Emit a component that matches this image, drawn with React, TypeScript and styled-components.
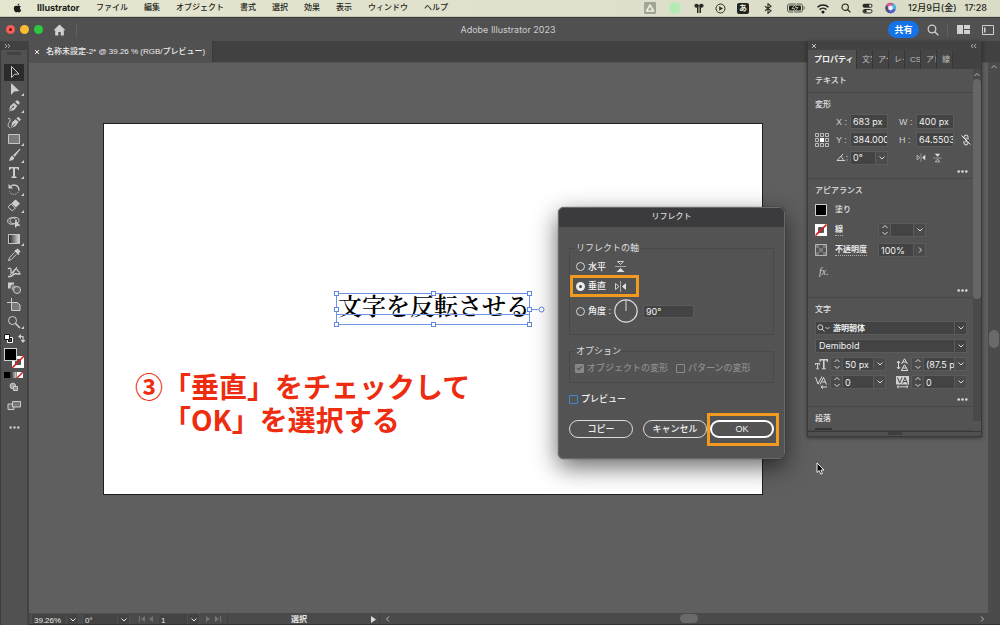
import React from "react";
import styled, { createGlobalStyle, css } from "styled-components";

const Global = createGlobalStyle`
  *, *::before, *::after { box-sizing: border-box; }
  html, body { margin: 0; }
  body {
    background: #5f5f5f;
    color: #e6e6e6;
    font-family: "Liberation Sans", "Noto Sans CJK JP", sans-serif;
    font-size: 8px;
    line-height: 12px;
  }
  button, input, select { font: inherit; color: inherit; margin: 0; padding: 0; border: 0; background: none; border-radius: 0; }
  fieldset, legend, h1, h2, p { margin: 0; padding: 0; border: 0; font: inherit; }
  input { min-width: 0; outline: none; }
  svg { display: block; flex: none; }
`;

const Screen = styled.div`
  display: flex;
  flex-direction: column;
  height: 100vh;
  overflow: hidden;
`;

/* ---------- system menu bar ---------- */

const MenuBar = styled.header`
  display: flex;
  align-items: center;
  flex: none;
  height: 17px;
  padding: 0 13px 0 12px;
  background: linear-gradient(90deg, #e4e6d0, #dadcc8);
  color: #1c1d18;
  border-bottom: 1px solid #c4c7b2;
`;

const MenuItems = styled.nav`
  display: flex;
  align-items: center;
  gap: 16px;
  flex: 1;
`;

const MenuItem = styled.button<{ $app?: boolean }>`
  white-space: nowrap;
  font-weight: 500;
  line-height: 12px;
  ${(p) =>
    p.$app &&
    css`
      font-family: Inter, sans-serif;
      font-weight: 700;
      font-size: 9px;
      width: 43px;
      margin: 0 0 0 -2px;
      text-align: left;
    `}
`;

const MenuExtras = styled.div`
  display: flex;
  align-items: center;
  gap: 11px;
`;

const InputMethod = styled.span`
  width: 12px;
  height: 11px;
  border-radius: 2px;
  background: #22231f;
  color: #eceedd;
  font-weight: 700;
  line-height: 11px;
  text-align: center;
`;

const Clock = styled.time`
  display: flex;
  gap: 8px;
  font-family: Inter, "Noto Sans CJK JP", sans-serif;
  font-size: 9px;
  font-weight: 500;
  white-space: nowrap;
`;

/* ---------- application title bar ---------- */

const TitleBar = styled.div`
  display: grid;
  grid-template-columns: 1fr auto 1fr;
  align-items: center;
  flex: none;
  height: 24px;
  padding: 0 6px;
  background: #505050;
  border-top: 1px solid #3a3a3a;
`;

const TitleSide = styled.div<{ $end?: boolean }>`
  display: flex;
  align-items: center;
  gap: ${(p) => (p.$end ? "8px" : "10px")};
  justify-content: ${(p) => (p.$end ? "flex-end" : "flex-start")};
`;

const Lights = styled.div`
  display: flex;
  gap: 5px;
`;

const Light = styled.button<{ $c: string; $dot?: boolean }>`
  display: grid;
  place-items: center;
  width: 9px;
  height: 9px;
  border-radius: 50%;
  background: ${(p) => p.$c};
  &::after {
    content: "";
    width: 3px;
    height: 3px;
    border-radius: 50%;
    background: ${(p) => (p.$dot ? "#7a0f0a" : "transparent")};
  }
`;

const TitleText = styled.h1`
  padding-left: 16px;
  font-size: 9px;
  color: #cfcfcf;
  font-family: Inter, sans-serif;
`;

const VRule = styled.span`
  width: 1px;
  height: 13px;
  background: #616161;
`;

const ShareButton = styled.button`
  width: 31px;
  height: 17px;
  border-radius: 9px;
  background: #1473e6;
  color: #fff;
  font-size: 9px;
  font-weight: 700;
`;

const IconButton = styled.button`
  display: grid;
  place-items: center;
  color: #d0d0d0;
`;

/* ---------- work area ---------- */

const Work = styled.div`
  position: relative;
  display: flex;
  flex: 1;
  min-height: 0;
`;

const ToolBar = styled.aside`
  display: flex;
  flex-direction: column;
  flex: none;
  width: 29px;
  background: #515151;
  border-left: 1px solid #3c3c3c;
  border-right: 2px solid #424242;
  color: #cdcdcd;
`;

const ToolHead = styled.div`
  height: 9px;
  padding-left: 3px;
  background: #414141;
  display: flex;
  align-items: center;
`;

const Grip = styled.div`
  width: 14px;
  height: 3px;
  margin: 2px 6px 9px;
  background: #424242;
`;

const ToolList = styled.div`
  display: flex;
  flex-direction: column;
  height: 266px;
  padding-left: 3px;
`;

const Tool = styled.button<{ $active?: boolean }>`
  position: relative;
  display: grid;
  place-items: center;
  flex: 1;
  width: 20px;
  border-radius: 1px;
  background: ${(p) => (p.$active ? "#2b2b2b" : "transparent")};
`;

const FlyoutMark = styled.i`
  position: absolute;
  right: 0;
  bottom: 1px;
  border-left: 3px solid transparent;
  border-bottom: 3px solid #cdcdcd;
`;

const ToolExtras = styled.div`
  display: flex;
  flex-direction: column;
  align-items: center;
  gap: 4px;
  width: 26px;
  padding-top: 2px;
`;

const Document = styled.main`
  display: flex;
  flex-direction: column;
  flex: 1;
  min-width: 0;
`;

const TabStrip = styled.div`
  flex: none;
  display: flex;
  height: 21px;
  background: #414141;
`;

const DocTab = styled.div`
  display: flex;
  align-items: center;
  gap: 6px;
  width: 184px;
  padding-left: 5px;
  background: #515151;
  border-right: 1px solid #3a3a3a;
  color: #ececec;
  font-weight: 500;
  white-space: nowrap;
`;

const DocBody = styled.div`
  display: flex;
  flex: 1;
  min-height: 0;
`;

const Canvas = styled.div`
  position: relative;
  flex: 1;
  overflow: hidden;
  background: #5f5f5f;
  border-top: 1px solid #535353;
`;

const Artboard = styled.section`
  position: absolute;
  left: 74px;
  top: 60px;
  width: 660px;
  height: 372px;
  background: #fff;
  border: 1px solid #1f1f1f;
`;

const TextObject = styled.div`
  position: absolute;
  left: 229px;
  top: 165px;
  color: #000;
`;

const TextObjectLabel = styled.p`
  padding: 1px 0 0 5px;
  font-family: "Noto Serif CJK JP", "Yu Mincho", "Noto Sans CJK JP", serif;
  font-size: 24px;
  font-weight: 600;
  line-height: 30px;
  white-space: nowrap;
`;

const SelectionFrame = styled.svg`
  position: absolute;
  left: 0;
  top: 0;
`;

const Note = styled.p`
  position: absolute;
  left: 31px;
  top: 246px;
  color: #ee2c10;
  font-family: "Noto Sans CJK JP", sans-serif;
  font-size: 28px;
  font-weight: 700;
  line-height: 33px;
  white-space: nowrap;
`;

const NoteLine = styled.span<{ $indent?: boolean }>`
  display: block;
  padding-left: ${(p) => (p.$indent ? "28px" : "0")};
`;

const VScroll = styled.div`
  display: flex;
  flex-direction: column;
  align-items: center;
  flex: none;
  width: 12px;
  padding-top: 1px;
  background: #4b4b4b;
  color: #b5b5b5;
`;

const VThumb = styled.div`
  width: 10px;
  height: 18px;
  margin-top: 259px;
  border-radius: 5px;
  background: #6a6a6a;
`;

const StatusBar = styled.footer`
  display: flex;
  flex: none;
  height: 12px;
  padding-left: 2px;
  overflow: hidden;
  background: #4a4a4a;
  border-bottom: 1px solid #333;
  color: #e8e8e8;
`;

const StatusSelect = styled.div<{ $w: number; $gap: number }>`
  display: flex;
  flex: none;
  width: ${(p) => p.$w}px;
  height: 14px;
  margin-right: ${(p) => p.$gap}px;
  background: #434343;
  border: 1px solid #505050;
  & > input { flex: 1; padding: 1px 0 0 2px; line-height: 12px; }
  & > button { display: grid; place-items: center; width: 12px; border-left: 1px solid #505050; }
`;

const PageNav = styled.div<{ $w: number }>`
  display: flex;
  align-items: center;
  justify-content: space-evenly;
  width: ${(p) => p.$w}px;
  color: #747474;
`;

const StatusLabel = styled.span`
  display: flex;
  align-items: center;
  justify-content: flex-end;
  gap: 64px;
  width: 153px;
  padding: 2px 3px 0 0;
  font-weight: 700;
  border-left: 1px solid #424242;
  border-right: 1px solid #424242;
`;

const HScroll = styled.div`
  display: flex;
  align-items: center;
  justify-content: space-between;
  flex: 1;
  padding: 0 14px 0 4px;
  color: #b5b5b5;
`;

const HThumb = styled.div`
  width: 18px;
  height: 9px;
  margin-left: 8px;
  border-radius: 5px;
  background: #6a6a6a;
`;

/* ---------- shared form parts ---------- */

const Field = styled.input<{ $w?: number }>`
  ${(p) => (p.$w ? `width: ${p.$w}px;` : "flex: 1;")}
  height: 100%;
  padding: 0 0 0 2px;
  background: #434343;
  border: 1px solid #5b5b5b;
  color: #f2f2f2;
  font-family: Inter, "Liberation Sans", sans-serif;
  font-size: 9px;
  line-height: 12px;
`;

const Spin = styled.button`
  display: grid;
  place-items: center;
  width: 13px;
  height: 100%;
  margin-left: -1px;
  border: 1px solid #5b5b5b;
  background: #4b4b4b;
  color: #d8d8d8;
`;

const Combo = styled.span<{ $w?: number; $h?: number }>`
  display: flex;
  ${(p) => (p.$w ? `width: ${p.$w}px;` : "flex: 1; min-width: 0;")}
  height: ${(p) => p.$h ?? 14}px;
  & > button:first-child { margin-left: 0; margin-right: -1px; }
`;

/* ---------- properties panel ---------- */

const Panel = styled.aside`
  position: absolute;
  right: 18px;
  top: 0;
  width: 175px;
  background: #535353;
  border: 1px solid #393939;
  border-top: 0;
  box-shadow: 0 1px 4px rgba(0, 0, 0, 0.45);
`;

const PanelHead = styled.div`
  display: flex;
  align-items: center;
  justify-content: space-between;
  height: 9px;
  padding: 0 4px 0 3px;
  background: #424242;
  color: #c0c0c0;
`;

const PanelTabs = styled.div`
  display: flex;
  height: 19px;
  background: #414141;
`;

const PanelTab = styled.button<{ $active?: boolean }>`
  overflow: hidden;
  width: ${(p) => (p.$active ? 49 : 16)}px;
  padding: 0 ${(p) => (p.$active ? 2 : 0)}px 0 ${(p) => (p.$active ? 6 : 5)}px;
  border-right: 1px solid #373737;
  background: ${(p) => (p.$active ? "#535353" : "#454545")};
  color: ${(p) => (p.$active ? "#f2f2f2" : "#bdbdbd")};
  font-weight: ${(p) => (p.$active ? 700 : 400)};
  text-align: left;
  white-space: nowrap;
`;

const PanelBody = styled.div`
  display: flex;
  height: 362px;
  overflow: hidden;
`;

const Sections = styled.div`
  flex: 1;
  min-width: 0;
`;

const Section = styled.section`
  padding: 6px 1px 0 7px;
  border-bottom: 1px solid #474747;
`;

const SectionTitle = styled.h2<{ $space?: number }>`
  margin-bottom: ${(p) => p.$space ?? 3}px;
  color: #e2e2e2;
  font-weight: 500;
`;

const More = styled.button`
  display: block;
  height: 13px;
  margin-left: auto;
  padding-right: 4px;
`;

const TransformRow = styled.div`
  display: flex;
  align-items: center;
  gap: 6px;
`;

const TransformGrid = styled.div`
  display: grid;
  grid-template-columns: 52px 55px;
  grid-auto-rows: 15px;
  gap: 3px 11px;
  margin-left: 1px;
`;

const TransformField = styled.label`
  display: flex;
  align-items: center;
  justify-content: space-between;
  color: #d0d0d0;
  font-size: 9px;
`;

const FlipButtons = styled.div`
  display: flex;
  align-items: center;
  gap: 7px;
  padding-left: 17px;
  color: #cdcdcd;
`;

const AppearanceRow = styled.div`
  display: grid;
  grid-template-columns: 12px 35px 48px;
  column-gap: 8px;
  align-items: center;
  height: 20px;
  color: #e8e8e8;
`;

const RowLabel = styled.label<{ $link?: boolean }>`
  white-space: nowrap;
  font-weight: 500;
  ${(p) =>
    p.$link &&
    css`
      justify-self: start;
      font-weight: 700;
      line-height: 10px;
      border-bottom: 1px dotted #b0b0b0;
    `}
`;

const FxRow = styled.div`
  display: flex;
  align-items: center;
  height: 24px;
  padding-left: 4px;
  color: #cfcfcf;
  font-family: "Liberation Serif", serif;
  font-style: italic;
  font-size: 10px;
`;

const CharacterGrid = styled.div`
  display: grid;
  grid-template-columns: 71px 71px;
  gap: 4px 10px;
  padding-bottom: 4px;
`;

const CharacterCell = styled.div`
  display: flex;
  align-items: center;
  gap: 1px;
`;

const FontPicker = styled.label`
  position: relative;
  grid-column: 1 / -1;
  height: 14px;
  & > select {
    width: 100%;
    height: 14px;
    appearance: none;
    padding-left: 3px;
    background: #434343;
    border: 1px solid #5b5b5b;
    color: #f0f0f0;
    font-family: Inter, "Noto Sans CJK JP", sans-serif;
    font-size: 9px;
    line-height: 12px;
  }
`;

const SearchSelect = styled.select`
  && { padding-left: 17px; font-size: 8px; font-weight: 700; }
`;

const PickerMark = styled.span<{ $left?: boolean }>`
  position: absolute;
  top: 0;
  ${(p) => (p.$left ? "left: 2px;" : "right: 0; width: 13px; border-left: 1px solid #5b5b5b;")}
  display: grid;
  place-items: center;
  height: 14px;
  pointer-events: none;
  color: #d0d0d0;
`;

const PanelScroll = styled.div`
  width: 8px;
  height: 352px;
  padding-top: 2px;
  background: #494949;
  color: #b5b5b5;
`;

const PanelThumb = styled.div`
  height: 220px;
  border-radius: 4px;
  background: #666;
`;

const PanelFoot = styled.div`
  height: 5px;
  border-top: 1px solid #393939;
  background: #505050;
  &::after {
    content: "";
    display: block;
    width: 14px;
    height: 3px;
    margin: 0 auto;
    background: #3f3f3f;
  }
`;

const CutButton = styled.div`
  width: 17px;
  height: 2px;
  margin-top: 2px;
  background: #353535;
`;

/* ---------- reflect dialog ---------- */

const Dialog = styled.form`
  position: absolute;
  left: 529px;
  top: 144px;
  width: 227px;
  border-radius: 6px;
  background: #535353;
  border: 1px solid #6b6b6b;
  box-shadow: 0 0 1px #111, 0 8px 24px rgba(0, 0, 0, 0.6);
  font-size: 9px;
  color: #f0f0f0;
`;

const DialogTitle = styled.h2`
  height: 19px;
  border-radius: 5px 5px 0 0;
  background: #3b3b3d;
  color: #d8d8d8;
  font-size: 8px;
  font-weight: 500;
  line-height: 18px;
  text-align: center;
`;

const DialogBody = styled.div`
  padding: 15px 10px 20px;
`;

const Group = styled.fieldset<{ $h: number; $pad: number }>`
  display: block;
  height: ${(p) => p.$h}px;
  border: 1px solid #494949;
  padding-top: ${(p) => p.$pad}px;
  margin-bottom: 10px;
  & > legend { margin-left: 5px; padding: 0 1px; color: #dedede; }
`;

const OptionRows = styled.div`
  display: flex;
  flex-direction: column;
  align-items: flex-start;
  gap: 7px;
  padding-left: 6px;
`;

const OptionRow = styled.label`
  position: relative;
  display: flex;
  align-items: center;
  font-weight: 500;
  line-height: 12px;
  & > svg { margin-left: 8px; }
`;

const AngleRow = styled.div`
  display: flex;
  align-items: center;
  height: 24px;
  & > svg { margin: 0 5px 0 3px; }
`;

const AngleField = styled.span`
  display: flex;
  width: 51px;
  height: 13px;
`;

const Radio = styled.input`
  appearance: none;
  width: 9px;
  height: 9px;
  margin-right: 3px;
  border: 1px solid #d6d6d6;
  border-radius: 50%;
  &:checked { border: 3px solid #ececec; background: #444; }
`;

const Check = styled.input<{ $accent?: boolean }>`
  appearance: none;
  display: grid;
  place-items: center;
  width: 9px;
  height: 9px;
  margin-right: 3px;
  border: 1px solid ${(p) => (p.$accent ? "#3f8ad0" : "#8a8a8a")};
  border-radius: 1px;
  &:checked { background: #858585; }
  &:checked::after {
    content: "";
    width: 3px;
    height: 5px;
    margin-bottom: 2px;
    border: solid #535353;
    border-width: 0 1px 1px 0;
    transform: rotate(45deg);
  }
`;

const CheckRow = styled.div<{ $muted?: boolean }>`
  display: flex;
  gap: 8px;
  ${(p) => (p.$muted ? "color: #8c8c8c; padding-left: 5px;" : "")}
`;

const Highlight = styled.span<{ $row?: boolean }>`
  position: absolute;
  inset: ${(p) => (p.$row ? "-5px -12px -5px -6px" : "-9px -7px -10px -5px")};
  border: 3px solid #f29a1f;
  pointer-events: none;
`;

const DialogButtons = styled.div`
  display: flex;
  gap: 3px;
  margin-top: 15px;
  & > :first-child { margin-right: auto; }
`;

const DialogButton = styled.button<{ $primary?: boolean }>`
  position: relative;
  width: 64px;
  height: 18px;
  border: ${(p) => (p.$primary ? "2px solid #fff" : "1px solid #dcdcdc")};
  border-radius: 9px;
  font-weight: 500;
`;

const Pointer = styled.svg`
  position: absolute;
  left: 787px;
  top: 399px;
`;

/* ---------- drawings ---------- */

const line = { fill: "none", stroke: "currentColor", strokeWidth: 1 } as const;

const Chevron = ({ dir = "down" }: { dir?: "down" | "up" | "left" | "right" }) => {
  const d = {
    down: "M1.5 2.5 4 5l2.5-2.5",
    up: "M1.5 5 4 2.5 6.5 5",
    left: "M5 1.5 2.5 4 5 6.5",
    right: "M3 1.5 5.5 4 3 6.5",
  }[dir];
  return <svg width="8" height="8" viewBox="0 0 8 8" {...line}><path d={d} /></svg>;
};

const SpinArrows = () => (
  <svg width="8" height="12" viewBox="0 0 8 12" {...line}><path d="M1.5 4 4 1.5 6.5 4M1.5 8 4 10.500 6.500 8" /></svg>
);

const Dots = () => (
  <svg width="11" height="3" viewBox="0 0 11 3" fill="#dcdcdc"><circle cx="1.7" cy="1.500" r="1.300" /><circle cx="5.500" cy="1.500" r="1.300" /><circle cx="9.300" cy="1.500" r="1.300" /></svg>
);

const Cross = () => <svg width="6" height="6" viewBox="0 0 6 6" {...line}><path d="m1 1 4 4M5 1 1 5" /></svg>;

const Doubles = ({ left }: { left?: boolean }) => (
  <svg width="7" height="6" viewBox="0 0 7 6" fill="none" stroke="#c4c4c4" strokeWidth=".8">
    <path d={left ? "M3 1 1.200 3 3 5M6 1 4.200 3 6 5" : "M1 1l1.800 2L1 5M4 1l1.800 2L4 5"} />
  </svg>
);

const Magnifier = ({ size = 12, w = 1.3 }: { size?: number; w?: number }) => (
  <svg width={size} height={size} viewBox="0 0 12 12" fill="none" stroke="currentColor" strokeWidth={w}><circle cx="5" cy="5" r="3.800" /><path d="m7.800 7.800 3.500 3.500" /></svg>
);

const FlipH = () => (
  <svg width="13" height="11" viewBox="0 0 13 11"><path d="M1.500 2.500v6L5 5.500z" fill="none" stroke="#d0d0d0" /><path d="M6.500 0v11" stroke="#a8a8a8" /><path d="M12 2v7L8 5.500z" fill="#e0e0e0" /></svg>
);

const FlipV = () => (
  <svg width="13" height="13" viewBox="0 0 13 13"><path d="M3.500 1.500h6L6.500 4.500z" fill="none" stroke="#d0d0d0" /><path d="M1 6.500h11" stroke="#a8a8a8" /><path d="M2.500 12h8L6.500 8z" fill="#e0e0e0" /></svg>
);

const NoneSwatch = ({ size = 12 }: { size?: number }) => (
  <svg width={size} height={size} viewBox="0 0 12 12"><path d="M0 0h12v12H0z" fill="#fff" /><path d="M3.500 3.500h5v5h-5z" fill="#535353" stroke="#222" strokeWidth=".6" /><path d="M.5 11.500 11.500.5" stroke="#d81e1e" strokeWidth="1.600" /></svg>
);

const nib = "M2 12.500 3.200 7 7 3.700 10.300 7 7.200 11z";

const toolIcons: { name: string; fly?: boolean; art: React.ReactNode }[] = [
  { name: "選択", art: <path d="M4.500 1.500v11l3-3.200 4.500-.3z" {...line} /> },
  { name: "ダイレクト選択", fly: true, art: <path d="M4 1v12l3.300-3.500L12.500 9z" /> },
  { name: "ペン", fly: true, art: <><path d={nib} /><path d="m8.200 2.800 2-1.800L13 3.800l-1.800 2z" /><path d="m2 12.500 4-4.500" stroke="#515151" /><circle cx="6.300" cy="7.700" r=".9" fill="#515151" /></> },
  { name: "曲線", art: <><path d="M4 13 5 7.500 8.500 4.200 11.500 7 8.700 11z" /><path d="m9.500 3.300 1.700-1.600L14 4.500l-1.700 1.700z" /><path d="m4.500 12.500 3.500-4" stroke="#515151" /><path d="M1 4c2-2 3 1 1.500 3S0 12 3.500 13" {...line} /></> },
  { name: "長方形", fly: true, art: <path d="M1.500 2.500h11v9h-11z" fill="#7b7b7b" stroke="#c6c6c6" /> },
  { name: "ブラシ", fly: true, art: <><path d="M13.500 1.200 7.800 8.800 6 7.200 12.700.8z" /><path d="M5.300 7.800 7.200 9.500C7 12 4.500 13 1.500 12.600 3.400 11.800 2.800 8.500 5.300 7.800z" /></> },
  { name: "文字", fly: true, art: <path d="M2 2h10v3h-1.200L10.300 3.500H8v7.800l1.500.4V13h-5v-1.300l1.500-.4V3.500H3.700L3.200 5H2z" /> },
  { name: "回転", fly: true, art: <><path d="M3.500 4.500A5 5 0 0 1 12 8" fill="none" stroke="currentColor" strokeWidth="1.300" /><path d="M12 8A5 5 0 0 1 2.500 9.500" fill="none" stroke="currentColor" strokeDasharray="1.200 1.200" /><path d="M1.500 2v4.500H6z" /></> },
  { name: "消しゴム", fly: true, art: <><path d="M8.500 1.500 13 5.500 9 9.500 4.500 5.300z" /><path d="m4 5.900 4.400 4.200-2.200 2.200H4.500L1.500 9.500V8.300z" fill="none" stroke="currentColor" /></> },
  { name: "シェイプ形成", art: <><ellipse cx="5" cy="6" rx="4.300" ry="3.200" {...line} /><ellipse cx="7.500" cy="5.500" rx="4.500" ry="3.200" {...line} /><path d="M8 5v8l2-2 3.500-.3z" /></> },
  { name: "グラデーション", fly: true, art: <path d="M1.500 2.500h11v9h-11z" fill="url(#ramp)" stroke="#c6c6c6" /> },
  { name: "スポイト", art: <><path d="m9 1.800 1.500-1.200 3 2.700-1.600 1.900.6.700-1 1L7.200 2.900l1-1z" /><path d="M7.500 4.500 2.500 9.800 1.500 12.700 4.300 11.500 9.500 6.300" {...line} /></> },
  { name: "ワープ", art: <><path d="M1 11.500c3 .8 4.500-1.500 6-2.500s3.500.8 6.500-.5" fill="none" stroke="currentColor" strokeWidth="1.600" /><path d="M1 4c2-2 3.500 0 3 2s1 2.500 2.500 1S8 3.500 9.500 4s.5 3.500 3.500 3" fill="none" stroke="currentColor" strokeWidth="1.300" /><path d="m3 10 7-8" {...line} /></> },
  { name: "ブレンド", art: <><path d="M1 1.500h6v6H1z" /><rect x="4" y="4" width="6" height="6" rx="2" fill="#9a9a9a" stroke="#515151" /><circle cx="10" cy="9" r="3.500" fill="#616161" stroke="currentColor" /></> },
  { name: "アートボード", art: <><path d="M4.500 0v4.500M0 4.500h4.500" {...line} /><path d="M4.500 4.500h6l2.500 2.500v5.500H4.500z" fill="#7b7b7b" stroke="currentColor" /></> },
  { name: "ズーム", fly: true, art: <><circle cx="5.500" cy="5.500" r="4" {...line} /><path d="m8.500 8.500 4.500 4.500" stroke="currentColor" strokeWidth="1.600" /></> },
];

const Handle = ({ x, y }: { x: number; y: number }) => <rect x={x - 2} y={y - 2} width="4" height="4" fill="#fff" stroke="#5f86e0" />;

const menus = ["ファイル", "編集", "オブジェクト", "書式", "選択", "効果", "表示", "ウィンドウ", "ヘルプ"];
const sideTabs = ["文字", "アー", "レイ", "CSS", "アピ", "線"];

export default function App() {
  return (
    <Screen>
      <Global />
      <MenuBar>
        <MenuItems>
          <svg width="11" height="12" viewBox="0 0 24 24" fill="#1c1d18" aria-hidden="true">
            <path d="M17.300 12.700c0-2.500 2-3.700 2.100-3.800-1.200-1.700-3-1.900-3.600-2-1.500-.1-3 .9-3.800.9-.8 0-2-.9-3.200-.9-1.700 0-3.200 1-4.100 2.400-1.700 3-.4 7.500 1.300 9.900.8 1.200 1.800 2.600 3.100 2.500 1.300 0 1.700-.8 3.300-.8 1.500 0 1.900.8 3.300.8s2.200-1.200 3-2.400c1-1.400 1.400-2.700 1.400-2.800-.1 0-2.800-1-2.800-3.800zM14.900 5.500c.7-.8 1.100-2 1-3.100-1 0-2.200.7-2.900 1.500-.6.700-1.200 1.900-1 3 1 .1 2.200-.6 2.900-1.400z" />
          </svg>
          <MenuItem $app>Illustrator</MenuItem>
          {menus.map((m) => <MenuItem key={m}>{m}</MenuItem>)}
        </MenuItems>
        <MenuExtras>
          <svg width="12" height="12" viewBox="0 0 12 12"><rect width="12" height="12" rx="1" fill="#a2a496" /><path d="M6 3 9.500 9h-7z" fill="none" stroke="#eceedd" strokeWidth="1.600" strokeLinejoin="round" /></svg>
          <svg width="16" height="12" viewBox="0 0 16 12"><ellipse cx="8" cy="6" rx="6" ry="5.500" fill="#b4ebb5" /></svg>
          <svg width="10" height="11" viewBox="0 0 10 11" fill="#2a2b26"><ellipse cx="2.600" cy="2.800" rx="2.200" ry="2" /><path d="M3 2h1.500v8H3z" /><ellipse cx="7.400" cy="2.800" rx="2.200" ry="2" /><path d="M5.500 2H7v8H5.500z" /></svg>
          <svg width="11" height="11" viewBox="0 0 11 11"><circle cx="5.500" cy="5.500" r="4.500" fill="none" stroke="#2a2b26" /><path d="m4.200 3.300 3.800 2.200-3.800 2.200z" fill="#2a2b26" /></svg>
          <InputMethod>あ</InputMethod>
          <svg width="16" height="11" viewBox="0 0 16 11" fill="none" stroke="#2a2b26" strokeWidth="1.100"><path d="m5 3.200 6 4.600-3 2.500V.7l3 2.500-6 4.600" /></svg>
          <svg width="18" height="10" viewBox="0 0 18 10"><rect x=".5" y="1" width="15" height="8" rx="2" fill="none" stroke="#55564e" /><rect x="2" y="2.400" width="12" height="5.200" rx="1" fill="#1f201c" /><path d="M17 3.500v3" stroke="#55564e" /><path d="M9.500 0 5 5.500h2.500L6.500 10 11 4.500H8.500z" fill="#1f201c" stroke="#dfe1cd" strokeWidth=".7" /></svg>
          <svg width="14" height="11" viewBox="0 0 14 11" fill="none" stroke="#1f201c" strokeWidth="1.500"><path d="M1.500 4.300a8 8 0 0 1 11 0M3.600 6.600a5 5 0 0 1 6.800 0" /><circle cx="7" cy="9" r=".8" fill="#1f201c" /></svg>
          <Magnifier size={10} />
          <svg width="11" height="11" viewBox="0 0 11 11"><rect x=".5" y=".8" width="10" height="4" rx="2" fill="#2a2b26" /><circle cx="8.300" cy="2.800" r="1.200" fill="#dfe1cd" /><rect x="1" y="6.500" width="9" height="3.500" rx="1.700" fill="none" stroke="#2a2b26" /><circle cx="3" cy="8.200" r="1.600" fill="#2a2b26" /></svg>
          <svg width="13" height="12" viewBox="0 0 13 12"><circle cx="6.500" cy="6" r="5.300" fill="#4a4f73" /><path d="M6.500 6 2 3.500A5.200 5.200 0 0 1 9 1.300z" fill="#d9568f" /><path d="M6.500 6 9 1.300a5.200 5.200 0 0 1 2.500 6.400z" fill="#4ab6e8" /><path d="M6.500 6 11 8a5 5 0 0 1-6 3z" fill="#4f62d8" /><circle cx="6.500" cy="6" r="2.400" fill="#f4eefb" /></svg>
          <Clock><span>12月9日(金)</span><span>17:28</span></Clock>
        </MenuExtras>
      </MenuBar>

      <TitleBar>
        <TitleSide>
          <Lights>
            <Light $c="#f35f57" $dot aria-label="閉じる" />
            <Light $c="#fbbd2f" aria-label="しまう" />
            <Light $c="#2bc840" aria-label="拡大" />
          </Lights>
          <IconButton aria-label="ホーム">
            <svg width="13" height="12" viewBox="0 0 13 12" fill="currentColor"><path d="M6.500.5.500 6.200h1.700V11.500h3.100V8h2.400v3.500h3.100V6.200h1.700z" /></svg>
          </IconButton>
          <VRule />
        </TitleSide>
        <TitleText>Adobe Illustrator 2023</TitleText>
        <TitleSide $end>
          <ShareButton>共有</ShareButton>
          <IconButton aria-label="検索"><Magnifier size={12} /></IconButton>
          <VRule />
          <IconButton aria-label="ドキュメントの整列">
            <svg width="18" height="9" viewBox="0 0 18 9" fill="currentColor"><path d="M1 0h6v9H1zM8 0h6v4H8zM8 5h6v4H8z" /></svg>
          </IconButton>
          <IconButton aria-label="ワークスペース">
            <svg width="12" height="10" viewBox="0 0 12 10" {...line}><path d="M.5.500h11v9H.5z" /><path d="M2 2.500h1.500v5H2z" fill="currentColor" stroke="none" /></svg>
          </IconButton>
        </TitleSide>
      </TitleBar>

      <Work>
        <ToolBar>
          <ToolHead><Doubles /></ToolHead>
          <Grip />
          <ToolList>
            {toolIcons.map((t, i) => (
              <Tool key={t.name} $active={i === 0} aria-label={t.name}>
                <svg width="14" height="14" viewBox="0 0 14 14" fill="currentColor">
                  <defs><linearGradient id="ramp"><stop stopColor="#222" /><stop offset="1" stopColor="#ddd" /></linearGradient></defs>
                  {t.art}
                </svg>
                {t.fly && <FlyoutMark />}
              </Tool>
            ))}
          </ToolList>
          <ToolExtras>
            <svg width="24" height="12" viewBox="0 0 24 12">
              <path d="M5.500 5.500h5v5h-5z" fill="none" stroke="#fff" strokeWidth="1" /><path d="M6.500 6.500h3v3h-3z" fill="none" stroke="#111" />
              <path d="M2.500 2.500h5v5h-5z" fill="#fff" stroke="#111" />
              <path d="M18 4.500h3v4" fill="none" stroke="#cdcdcd" strokeWidth="1.200" /><path d="m19 2-3 2.500 3 2.500zM18.500 8h5L21 11z" fill="#cdcdcd" />
            </svg>
            <svg width="22" height="20" viewBox="0 0 22 20">
              <path d="M9 8h12v12H9z" fill="#fff" /><path d="M12.500 11.500h5v5h-5z" fill="#535353" stroke="#555" /><path d="m9 20 12-12" stroke="#d81e1e" strokeWidth="1.600" />
              <rect x="1.500" y=".5" width="12" height="12" fill="#000" stroke="#cfcfcf" />
            </svg>
            <svg width="20" height="6" viewBox="0 0 20 6"><path d="M0 0h6v6H0z" fill="#000" /><path d="M6.500 0h6v6h-6z" fill="url(#ramp)" /><path d="M13 0h6v6h-6z" fill="#fff" /><path d="m13 6 6-6" stroke="#d81e1e" strokeWidth="1.400" /></svg>
            <svg width="10" height="10" viewBox="0 0 10 10"><circle cx="3.800" cy="4" r="2.800" fill="#9c9c9c" stroke="#cdcdcd" /><path d="M4.500 4.500h4v4h-4z" fill="#8a8a8a" stroke="#cdcdcd" /></svg>
            <svg width="14" height="18" viewBox="0 0 14 18"><path d="M1 8h6v5.500H1z" fill="#6a6a6a" stroke="#cdcdcd" /><path d="M5.500 5.500h8v5.500h-8z" fill="#777" stroke="#cdcdcd" /></svg>
            <svg width="11" height="18" viewBox="0 0 11 18" fill="#cdcdcd"><circle cx="1.700" cy="9.500" r="1.200" /><circle cx="5.500" cy="9.500" r="1.200" /><circle cx="9.300" cy="9.500" r="1.200" /></svg>
          </ToolExtras>
        </ToolBar>

        <Document>
          <TabStrip>
            <DocTab><Cross />名称未設定-2* @ 39.26 % (RGB/プレビュー)</DocTab>
          </TabStrip>
          <DocBody>
            <Canvas>
              <Artboard>
                <TextObject>
                  <TextObjectLabel>文字を反転させる</TextObjectLabel>
                  <SelectionFrame width="214" height="40" viewBox="0 0 214 40">
                    <path d="M3.500 4.500h193v31H3.500zM3.500 25.500h193M196.500 20.500h9" fill="none" stroke="#6f93e4" />
                    <Handle x={3.5} y={4.5} /><Handle x={100.5} y={4.5} /><Handle x={196.5} y={4.5} />
                    <Handle x={3.5} y={20.5} /><Handle x={196.5} y={20.5} />
                    <Handle x={3.5} y={35.5} /><Handle x={100.5} y={35.5} /><Handle x={196.5} y={35.5} />
                    <circle cx="208.500" cy="20.500" r="2.500" fill="#fff" stroke="#5f86e0" />
                  </SelectionFrame>
                </TextObject>
                <Note>
                  <NoteLine>③「垂直」をチェックして</NoteLine>
                  <NoteLine $indent>「OK」を選択する</NoteLine>
                </Note>
              </Artboard>

              <Dialog onSubmit={(e) => e.preventDefault()}>
                <DialogTitle>リフレクト</DialogTitle>
                <DialogBody>
                  <Group $h={93} $pad={6}>
                    <legend>リフレクトの軸</legend>
                    <OptionRows>
                      <OptionRow><Radio type="radio" name="axis" />水平<FlipV /></OptionRow>
                      <OptionRow><Radio type="radio" name="axis" defaultChecked />垂直<FlipH /><Highlight $row /></OptionRow>
                      <AngleRow>
                        <OptionRow><Radio type="radio" name="axis" />角度 :</OptionRow>
                        <svg width="24" height="24" viewBox="0 0 24 24" fill="none" stroke="#dedede"><circle cx="12" cy="12" r="11.200" strokeWidth="1.200" /><path d="M12 1v11" /></svg>
                        <AngleField><Field aria-label="角度" defaultValue="90°" /></AngleField>
                      </AngleRow>
                    </OptionRows>
                  </Group>
                  <Group $h={38} $pad={5}>
                    <legend>オプション</legend>
                    <CheckRow $muted>
                      <OptionRow><Check type="checkbox" defaultChecked disabled />オブジェクトの変形</OptionRow>
                      <OptionRow><Check type="checkbox" disabled />パターンの変形</OptionRow>
                    </CheckRow>
                  </Group>
                  <CheckRow>
                    <OptionRow><Check type="checkbox" $accent />プレビュー</OptionRow>
                  </CheckRow>
                  <DialogButtons>
                    <DialogButton type="button">コピー</DialogButton>
                    <DialogButton type="button">キャンセル</DialogButton>
                    <DialogButton $primary>OK<Highlight /></DialogButton>
                  </DialogButtons>
                </DialogBody>
              </Dialog>

              <Pointer width="9" height="14" viewBox="0 0 9 14"><path d="M1 1v9.500l2.200-2 1.500 3.700 1.700-.7-1.500-3.500H8z" fill="#000" stroke="#fff" strokeWidth=".9" /></Pointer>
            </Canvas>
            <VScroll><Chevron dir="up" /><VThumb /></VScroll>
          </DocBody>
          <StatusBar>
            <StatusSelect $w={48} $gap={3}><input aria-label="ズーム" defaultValue="39.26%" /><button aria-label="ズーム一覧"><Chevron /></button></StatusSelect>
            <StatusSelect $w={48} $gap={4}><input aria-label="回転" defaultValue="0°" /><button aria-label="回転一覧"><Chevron /></button></StatusSelect>
            <PageNav $w={24}>
              <svg width="6" height="6" viewBox="0 0 6 6" fill="currentColor"><path d="M0 0h1v6H0zM6 0v6L2 3z" /></svg>
              <svg width="4" height="6" viewBox="0 0 4 6" fill="currentColor"><path d="M4 0v6L0 3z" /></svg>
            </PageNav>
            <StatusSelect $w={42} $gap={0}><input aria-label="アートボード" defaultValue="1" /><button aria-label="アートボード一覧"><Chevron /></button></StatusSelect>
            <PageNav $w={27}>
              <svg width="4" height="6" viewBox="0 0 4 6" fill="currentColor"><path d="M0 0v6l4-3z" /></svg>
              <svg width="6" height="6" viewBox="0 0 6 6" fill="currentColor"><path d="M5 0h1v6H5zM0 0v6l4-3z" /></svg>
            </PageNav>
            <StatusLabel>選択<svg width="5" height="7" viewBox="0 0 5 7" fill="#dcdcdc"><path d="M0 0v7l5-3.500z" /></svg></StatusLabel>
            <HScroll><Chevron dir="left" /><HThumb /><Chevron dir="right" /></HScroll>
          </StatusBar>
        </Document>

        <Panel>
          <PanelHead><Cross /><Doubles left /></PanelHead>
          <PanelTabs>
            <PanelTab $active>プロパティ</PanelTab>
            {sideTabs.map((t) => <PanelTab key={t}>{t}</PanelTab>)}
          </PanelTabs>
          <PanelBody>
            <Sections>
              <Section><SectionTitle $space={5}>テキスト</SectionTitle></Section>
              <Section>
                <SectionTitle>変形</SectionTitle>
                <TransformRow>
                  <svg width="14" height="14" viewBox="0 0 14 14" fill="none" stroke="#c8c8c8" strokeWidth=".9">
                    <path d="M.5.500h3v3h-3zM5.500.500h3v3h-3zM10.500.500h3v3h-3zM.5 5.500h3v3h-3zM10.500 5.500h3v3h-3zM.5 10.500h3v3h-3zM5.500 10.500h3v3h-3zM10.500 10.500h3v3h-3z" />
                    <path d="M5 5h4v4H5z" fill="#fff" stroke="none" />
                  </svg>
                  <TransformGrid>
                    <TransformField>X :<Field $w={38} defaultValue="683 px" /></TransformField>
                    <TransformField>W :<Field $w={38} defaultValue="400 px" /></TransformField>
                    <TransformField>Y :<Field $w={38} defaultValue="384.0002 px" /></TransformField>
                    <TransformField>H :<Field $w={38} defaultValue="64.5503 px" /></TransformField>
                    <TransformField as="div">
                      <svg width="12" height="9" viewBox="0 0 12 9" {...line}><path d="M7 1 1 7.500h8M5 3.500c1.500 1 2 2.500 2 4" /><path d="M11 3v1M11 6.500v1" /></svg>
                      <Combo $w={38}><Field aria-label="回転角度" defaultValue="0°" /><Spin aria-label="角度一覧"><Chevron /></Spin></Combo>
                    </TransformField>
                    <FlipButtons>
                      <svg width="10" height="9" viewBox="0 0 13 11"><path d="M1.500 2.500v6L5 5.500z" fill="none" stroke="#d0d0d0" /><path d="M6.500 0v11" stroke="#a8a8a8" /><path d="M12 2v7L8 5.500z" fill="#e0e0e0" /></svg>
                      <svg width="9" height="10" viewBox="0 0 11 13"><path d="M2 1h7L5.500 5z" fill="#e0e0e0" /><path d="M0 6.500h11" stroke="#a8a8a8" /><path d="M2.500 11.500h6L5.500 8z" fill="none" stroke="#d0d0d0" /></svg>
                    </FlipButtons>
                  </TransformGrid>
                  <svg width="12" height="14" viewBox="0 0 12 14" {...line}><path d="M4 5.500V4a2 2 0 0 1 4 0v2.500M4 8v2a2 2 0 0 0 4 0V9M6 4.500v5M1.500 2.500l9 9" /></svg>
                </TransformRow>
                <More aria-label="変形オプション"><Dots /></More>
              </Section>
              <Section>
                <SectionTitle>アピアランス</SectionTitle>
                <AppearanceRow>
                  <svg width="12" height="12" viewBox="0 0 12 12"><path d="M.5.500h11v11H.5z" fill="#000" stroke="#d0d0d0" /></svg>
                  <RowLabel as="span">塗り</RowLabel>
                </AppearanceRow>
                <AppearanceRow>
                  <NoneSwatch />
                  <RowLabel $link htmlFor="stroke">線</RowLabel>
                  <Combo><Spin aria-label="線幅の増減"><SpinArrows /></Spin><Field id="stroke" /><Spin aria-label="線幅一覧"><Chevron /></Spin></Combo>
                </AppearanceRow>
                <AppearanceRow>
                  <svg width="12" height="12" viewBox="0 0 12 12"><path d="M.5.500h11v11H.5z" fill="#7a7a7a" stroke="#b4b4b4" /><path d="M4 1h4v3H4zM1 4h3v4H1zM8 4h3v4H8zM4 8h4v3H4z" fill="#555" /></svg>
                  <RowLabel $link htmlFor="opacity">不透明度</RowLabel>
                  <Combo><Field id="opacity" defaultValue="100%" /><Spin aria-label="不透明度スライダー"><Chevron dir="right" /></Spin></Combo>
                </AppearanceRow>
                <FxRow>fx.</FxRow>
                <More aria-label="アピアランスオプション"><Dots /></More>
              </Section>
              <Section>
                <SectionTitle $space={5}>文字</SectionTitle>
                <CharacterGrid>
                  <FontPicker>
                    <SearchSelect aria-label="フォント"><option>游明朝体</option></SearchSelect>
                    <PickerMark $left><svg width="14" height="8" viewBox="0 0 14 8" {...line}><circle cx="3.300" cy="3.300" r="2.500" /><path d="m5 5 2.500 2.500M8.500 3l2 2 2-2" /></svg></PickerMark>
                    <PickerMark><Chevron /></PickerMark>
                  </FontPicker>
                  <FontPicker>
                    <select aria-label="スタイル"><option>Demibold</option></select>
                    <PickerMark><Chevron /></PickerMark>
                  </FontPicker>
                  <CharacterCell>
                    <svg width="14" height="12" viewBox="0 0 14 12" fill="#d0d0d0"><path d="M4.500 1H13v3h-1l-.5-1.500H9.600V10l1.200.4v.9H6.900v-.9L8 10V2.500H6L5.500 4h-1z" /><path d="M0 5h5v2h-.7l-.3-.9H3.100v4.200l.7.300v.7H1.300v-.7l.7-.3V6.100H1L.7 7H0z" /></svg>
                    <Combo><Spin aria-label="サイズの増減"><SpinArrows /></Spin><Field aria-label="フォントサイズ" defaultValue="50 px" /><Spin aria-label="サイズ一覧"><Chevron /></Spin></Combo>
                  </CharacterCell>
                  <CharacterCell>
                    <svg width="14" height="13" viewBox="0 0 14 13" {...line}><path d="M2.500 3.500v7M1 5l1.500-2L4 5M1 9l1.500 2L4 9M5.500 6 8.500.800 11.500 6M6.500 4h4M5.500 12l3-5.200L11.500 12M6.500 10h4M5 12.500h7" strokeWidth=".9" /></svg>
                    <Combo><Spin aria-label="行送りの増減"><SpinArrows /></Spin><Field aria-label="行送り" defaultValue="(87.5 pt)" /><Spin aria-label="行送り一覧"><Chevron /></Spin></Combo>
                  </CharacterCell>
                  <CharacterCell>
                    <svg width="14" height="13" viewBox="0 0 14 13" {...line}><path d="m.5 1 2.500 7L7 .500M5 8.500 8.500 1.500l3 7M7 6h3.500M6 11h6M8 9.500 6 11l2 1.500" strokeWidth=".9" /></svg>
                    <Combo><Spin aria-label="カーニングの増減"><SpinArrows /></Spin><Field aria-label="カーニング" defaultValue="0" /><Spin aria-label="カーニング一覧"><Chevron /></Spin></Combo>
                  </CharacterCell>
                  <CharacterCell>
                    <svg width="14" height="13" viewBox="0 0 14 13"><path d="M0 0h13v8.500H0z" fill="#d0d0d0" /><path d="m1.500 1.500 2.200 5.500 2.300-5.500M6.500 7.500 9 1.500l2.500 6M7.500 5.500h3" fill="none" stroke="#444" /><path d="M1 10.800h11M2.500 9.500 1 10.800 2.500 12M10.500 9.500 12 10.800 10.500 12" fill="none" stroke="#d0d0d0" /></svg>
                    <Combo><Spin aria-label="字間の増減"><SpinArrows /></Spin><Field aria-label="トラッキング" defaultValue="0" /><Spin aria-label="字間一覧"><Chevron /></Spin></Combo>
                  </CharacterCell>
                </CharacterGrid>
                <More aria-label="文字オプション"><Dots /></More>
              </Section>
              <Section>
                <SectionTitle>段落</SectionTitle>
                <CutButton />
              </Section>
            </Sections>
            <PanelScroll><Chevron dir="up" /><PanelThumb /></PanelScroll>
          </PanelBody>
          <PanelFoot />
        </Panel>
      </Work>
    </Screen>
  );
}
